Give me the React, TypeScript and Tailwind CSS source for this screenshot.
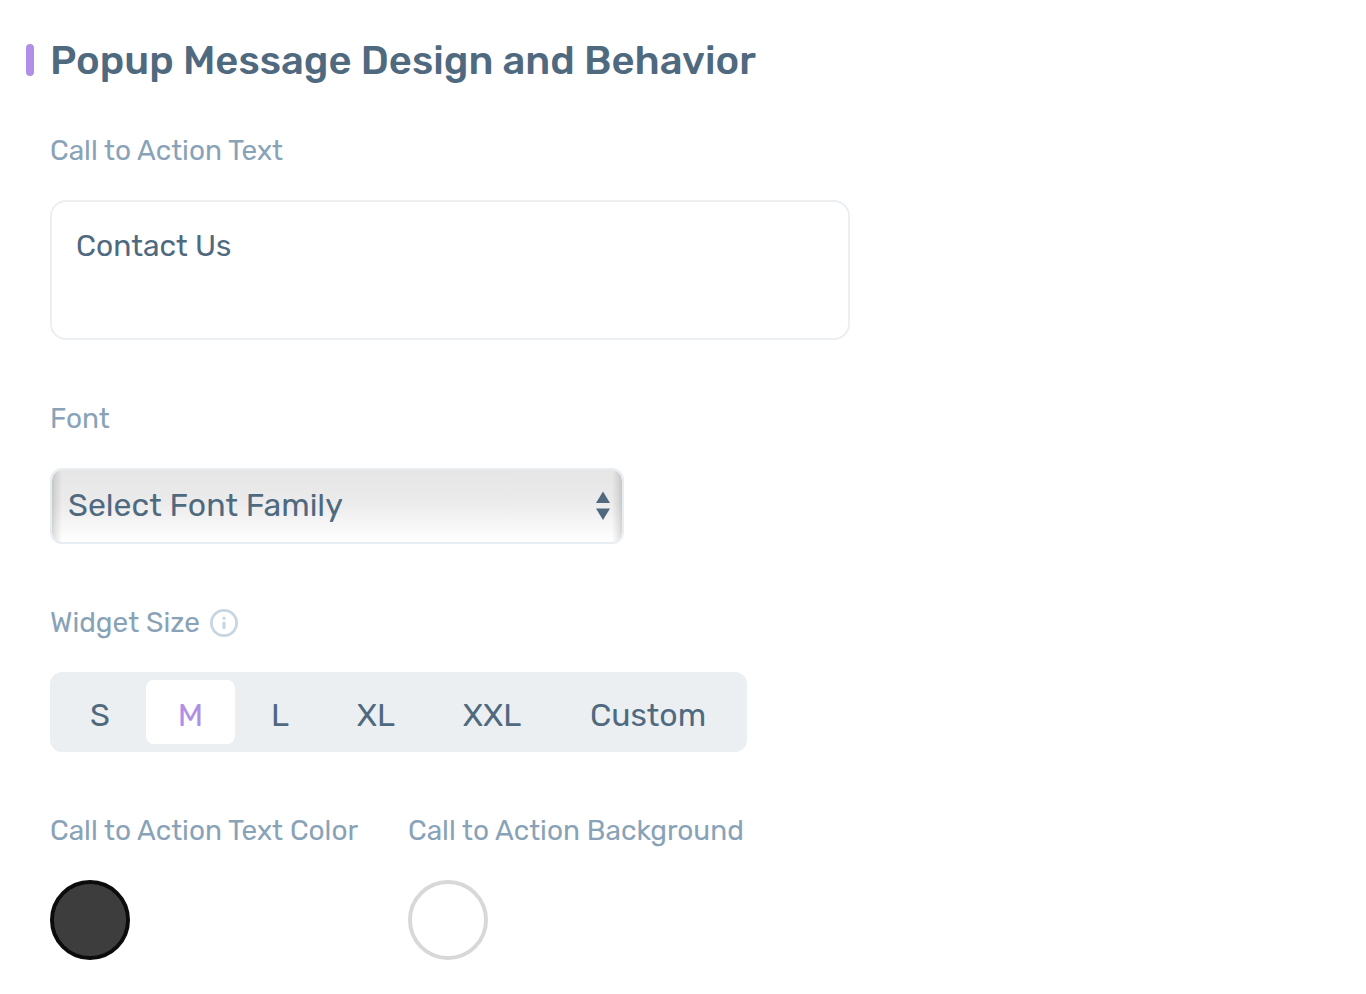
import { useState } from "react";

const sizes = ["S", "M", "L", "XL", "XXL", "Custom"];
const labelClass = "block text-[28px] leading-[38px] text-[#88a2b7]";
const swatchClass =
  "mt-[30px] block size-20 cursor-pointer appearance-none overflow-hidden rounded-full border-4 p-0 [&::-webkit-color-swatch-wrapper]:p-0 [&::-webkit-color-swatch]:rounded-full [&::-webkit-color-swatch]:border-0";

function InfoIcon() {
  return (
    <svg viewBox="0 0 28 28" className="size-7" fill="none" aria-hidden="true">
      <circle cx="14" cy="14" r="12.6" stroke="#c8d6e1" strokeWidth="2.8" />
      <circle cx="14" cy="9.2" r="1.6" fill="#c8d6e1" />
      <path d="M14 14v4.6" stroke="#c8d6e1" strokeWidth="3.2" strokeLinecap="round" />
    </svg>
  );
}

export default function App() {
  const [size, setSize] = useState("M");
  const [message, setMessage] = useState("Contact Us");
  const [textColor, setTextColor] = useState("#3d3d3d");
  const [background, setBackground] = useState("#ffffff");

  return (
    <main className="min-h-screen bg-white px-[26px] pt-9 pb-8 font-['Rubik','Roboto',sans-serif] text-[#4f697f]">
      <header className="flex h-12 items-center gap-4">
        <span className="h-8 w-2 rounded-full bg-[#b18fe6]" />
        <h1 className="pt-0.5 text-[40px] leading-12 font-medium">Popup Message Design and Behavior</h1>
      </header>

      <form className="pl-6">
        <div className="mt-12">
          <label htmlFor="cta" className={labelClass}>Call to Action Text</label>
          <textarea
            id="cta"
            value={message}
            onChange={(e) => setMessage(e.target.value)}
            className="mt-[30px] block h-[140px] w-full max-w-[800px] resize-none rounded-2xl border-2 border-[#ebeff2] bg-white px-6 py-6 text-[30px] leading-10 outline-none"
          />
        </div>

        <div className="mt-15">
          <label htmlFor="font" className={labelClass}>Font</label>
          <div className="relative mt-[30px] max-w-[574px]">
            <select
              id="font"
              className="block h-[76px] w-full appearance-none rounded-xl border-2 border-[#e8edf1] bg-[linear-gradient(90deg,#00000026,#00000014_4px,#0000_10px,#0000_calc(100%-10px),#00000014_calc(100%-4px),#00000026),linear-gradient(#e6e6e6,#ebebeb_45%,#fff)] bg-clip-padding pr-12 pb-0.5 pl-4 text-[32px] outline-none"
            >
              <option>Select Font Family</option>
            </select>
            <svg viewBox="0 0 14 30" className="pointer-events-none absolute top-[23px] right-3.5 h-[30px] w-3.5" fill="#4f697f" aria-hidden="true">
              <path d="M7 0.500 14 12H0ZM7 29 0 17.500H14Z" />
            </svg>
          </div>
        </div>

        <fieldset className="mt-15">
          <legend className="flex items-center gap-2.5 text-[28px] leading-[38px] text-[#88a2b7]">
            Widget Size
            <InfoIcon />
          </legend>
          <div className="mt-[30px] grid h-20 max-w-[697px] grid-cols-[84fr_89fr_82fr_102fr_122fr_182fr] gap-1 rounded-xl bg-[#ebeff2] p-2">
            {sizes.map((s) => (
              <label
                key={s}
                className="flex cursor-pointer items-center justify-center rounded-lg pt-1.5 text-[32px] leading-10 has-checked:bg-white has-checked:text-[#b18fe6]"
              >
                <input
                  type="radio"
                  name="size"
                  value={s}
                  checked={size === s}
                  onChange={() => setSize(s)}
                  className="sr-only"
                />
                {s}
              </label>
            ))}
          </div>
        </fieldset>

        <div className="mt-15 flex flex-wrap gap-12">
          <div className="w-[310px]">
            <label htmlFor="text-color" className={labelClass}>Call to Action Text Color</label>
            <input
              id="text-color"
              type="color"
              value={textColor}
              onChange={(e) => setTextColor(e.target.value)}
              className={`${swatchClass} border-[#0c0c0c] bg-[#3d3d3d]`}
            />
          </div>
          <div>
            <label htmlFor="background" className={labelClass}>Call to Action Background</label>
            <input
              id="background"
              type="color"
              value={background}
              onChange={(e) => setBackground(e.target.value)}
              className={`${swatchClass} border-[#d8d8d8] bg-white`}
            />
          </div>
        </div>
      </form>
    </main>
  );
}
